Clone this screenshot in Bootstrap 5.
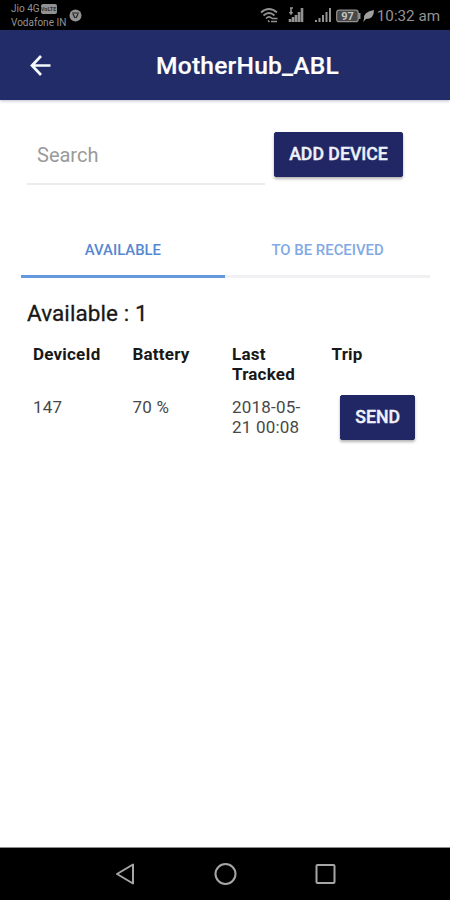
<!DOCTYPE html>
<html lang="en">
<head>
<meta charset="utf-8">
<meta name="viewport" content="width=device-width, initial-scale=1">
<title>MotherHub_ABL</title>
<link href="https://cdn.jsdelivr.net/npm/bootstrap@5.3.0/dist/css/bootstrap.min.css" rel="stylesheet">
<style>
body{font-family:Roboto,"Liberation Sans",sans-serif;color:#181818;background:#fff;height:900px;overflow:hidden}
.status-bar{height:30px;background:#000;color:#929292;padding:0 10px 0 11px}
.carriers{font-size:10px;line-height:14px;padding-top:2px}
.carriers .volte{background:#929292;color:#333;font-size:5.5px;line-height:10px;width:16px;height:10px;border-radius:2px;text-align:center;font-weight:700;margin-left:1px}
.clock{font-size:15.2px;line-height:31px;padding-top:1px;margin-left:1px}
.app-bar{height:70px;background:#222c68;box-shadow:0 1px 3px rgba(34,44,104,.3)}
.app-bar .back{margin-left:28px;width:26px}
.app-title{font-size:24.6px;line-height:70px;font-weight:500;letter-spacing:.22px;margin-left:102px;padding-top:1px;color:#fff;-webkit-text-stroke:.2px #fff}
.search-row{padding:32px 0 0 27px;height:85px}
.search-box{width:238px;height:53px;margin-right:9px;border:0;border-bottom:2px solid #ececee;border-radius:0;padding:0 0 6px 10px;font:400 20px Roboto,sans-serif;color:#777;background:none}
.search-box::placeholder{color:#9a9a9a;opacity:1}
.btn-navy{--bs-btn-color:#eef0fa;--bs-btn-bg:#202764;--bs-btn-border-color:#202764;--bs-btn-hover-bg:#2b347a;--bs-btn-hover-color:#fff;--bs-btn-padding-x:0;--bs-btn-padding-y:0;height:45px;border-radius:2px;font-size:17.7px;font-weight:500;-webkit-text-stroke:.4px #eef0fa;box-shadow:0 2px 3px rgba(0,0,0,.3);line-height:41px}
.add-btn{width:129px}
.send-btn{width:75px;margin-left:8.6px}
.tabs{margin:36px 20px 0 20.5px}
.tabs .tab{height:57px;width:50%;border:0;border-bottom:3px solid #f1f1f3;background:none;color:#82a9e4;font-size:14.9px;font-weight:500;padding:4px 0 0;line-height:48px}
.tabs .tab.active{color:#5688d2;border-bottom-color:#6498df}
.count{font-size:22.5px;line-height:30px;letter-spacing:.08px;margin:20px 0 0 27px;font-weight:400;-webkit-text-stroke:.3px #181818}
.devices{margin:16px 0 0 33px;width:398px;font-size:17px;letter-spacing:.2px;line-height:20px}
.devices .cell{width:25%}
.heads{height:51px;font-weight:700}
.vals{color:#484848;font-weight:400}
.vals .cell{padding-top:2px}
.vals .cell.action{padding-top:0;letter-spacing:0}
.nav-keys{height:52px;background:#000;box-shadow:0 -1px 0 #8c8c8c}
</style>
<script src="https://cdn.jsdelivr.net/npm/bootstrap@5.3.0/dist/js/bootstrap.bundle.min.js"></script>
</head>
<body class="d-flex flex-column">
<div class="status-bar d-flex align-items-start flex-shrink-0">
  <div class="carriers">
    <div class="d-flex align-items-center"><span>Jio 4G</span><span class="volte">VoLTE</span></div>
    <div class="text-nowrap">Vodafone IN</div>
  </div>
  <svg class="mt-2" width="16" height="14" viewBox="-3 0 16 14"><circle cx="6.500" cy="7.500" r="6" fill="#929292"/><path d="M3 5h7M4 6l2 4M9 6l-2 4" stroke="#222" stroke-width="1.200" fill="none"/></svg>
  <svg class="ms-auto" width="116" height="30" viewBox="0 0 116 30" fill="none" stroke="#929292">
    <path d="M1 12.500Q9 5.500 17 12.500M3.500 15.500Q9 10.500 14.500 15.500M6 18.500Q9 15.500 12 18.500" stroke-width="1.700"/><path d="M8 20.500l1.500 1.500M12 18.500h5.500M11 21.500h6" stroke-width="1.500"/>
    <path d="M30 22v-3M33 22v-5M36 22v-7M39 22V12M42 22V8" stroke-width="2.600"/><path d="M31 8v6M29.500 12l1.500 2 1.500-2M30 8h3" stroke-width="1.500"/>
    <path d="M56 22v-2M59.500 22v-4M63 22v-7M66.500 22V12M70 22V8" stroke-width="2"/>
    <rect x="76.700" y="10.200" width="21.500" height="11.500" rx="2.500" fill="#484848" stroke-width="1.200"/><path d="M99.500 13v6" stroke-width="2"/>
    <text x="87.500" y="20" text-anchor="middle" fill="#c4c4c4" stroke="none" font-size="11" font-weight="700" font-family="Roboto">97</text>
    <path d="M104 19q-1-7 10-9q0 9-8 9l-3 3z" fill="#a0a0a0" stroke="none"/>
  </svg>
  <span class="clock">10:32 am</span>
</div>
<header class="app-bar d-flex align-items-center flex-shrink-0">
  <svg class="back" width="26" height="24" viewBox="0 0 26 24" fill="none" stroke="#f4fafa" stroke-width="2.700"><path d="M13 3L4 12.500L13 22M4 12.500H22.500"/></svg>
  <h1 class="app-title mb-0">MotherHub_ABL</h1>
</header>
<main class="flex-grow-1">
  <div class="search-row d-flex align-items-start">
    <input class="search-box" type="text" placeholder="Search" aria-label="Search">
    <button class="btn btn-navy add-btn">ADD DEVICE</button>
  </div>
  <div class="tabs d-flex">
    <button class="tab active">AVAILABLE</button>
    <button class="tab">TO BE RECEIVED</button>
  </div>
  <h2 class="count">Available : 1</h2>
  <div class="devices">
    <div class="heads d-flex"><div class="cell">DeviceId</div><div class="cell">Battery</div><div class="cell">Last<br>Tracked</div><div class="cell">Trip</div></div>
    <div class="vals d-flex"><div class="cell">147</div><div class="cell">70 %</div><div class="cell">2018-05-<br>21 00:08</div><div class="cell action"><button class="btn btn-navy send-btn">SEND</button></div></div>
  </div>
</main>
<footer class="nav-keys flex-shrink-0">
  <svg width="450" height="52" viewBox="0 0 450 52" fill="none" stroke="#a6a6a6" stroke-width="2" stroke-linejoin="round"><path d="M133 16.500v19L117 26z"/><circle cx="225.500" cy="26" r="10"/><rect x="316.500" y="17" width="18" height="18" rx="1"/></svg>
</footer>
</body>
</html>
